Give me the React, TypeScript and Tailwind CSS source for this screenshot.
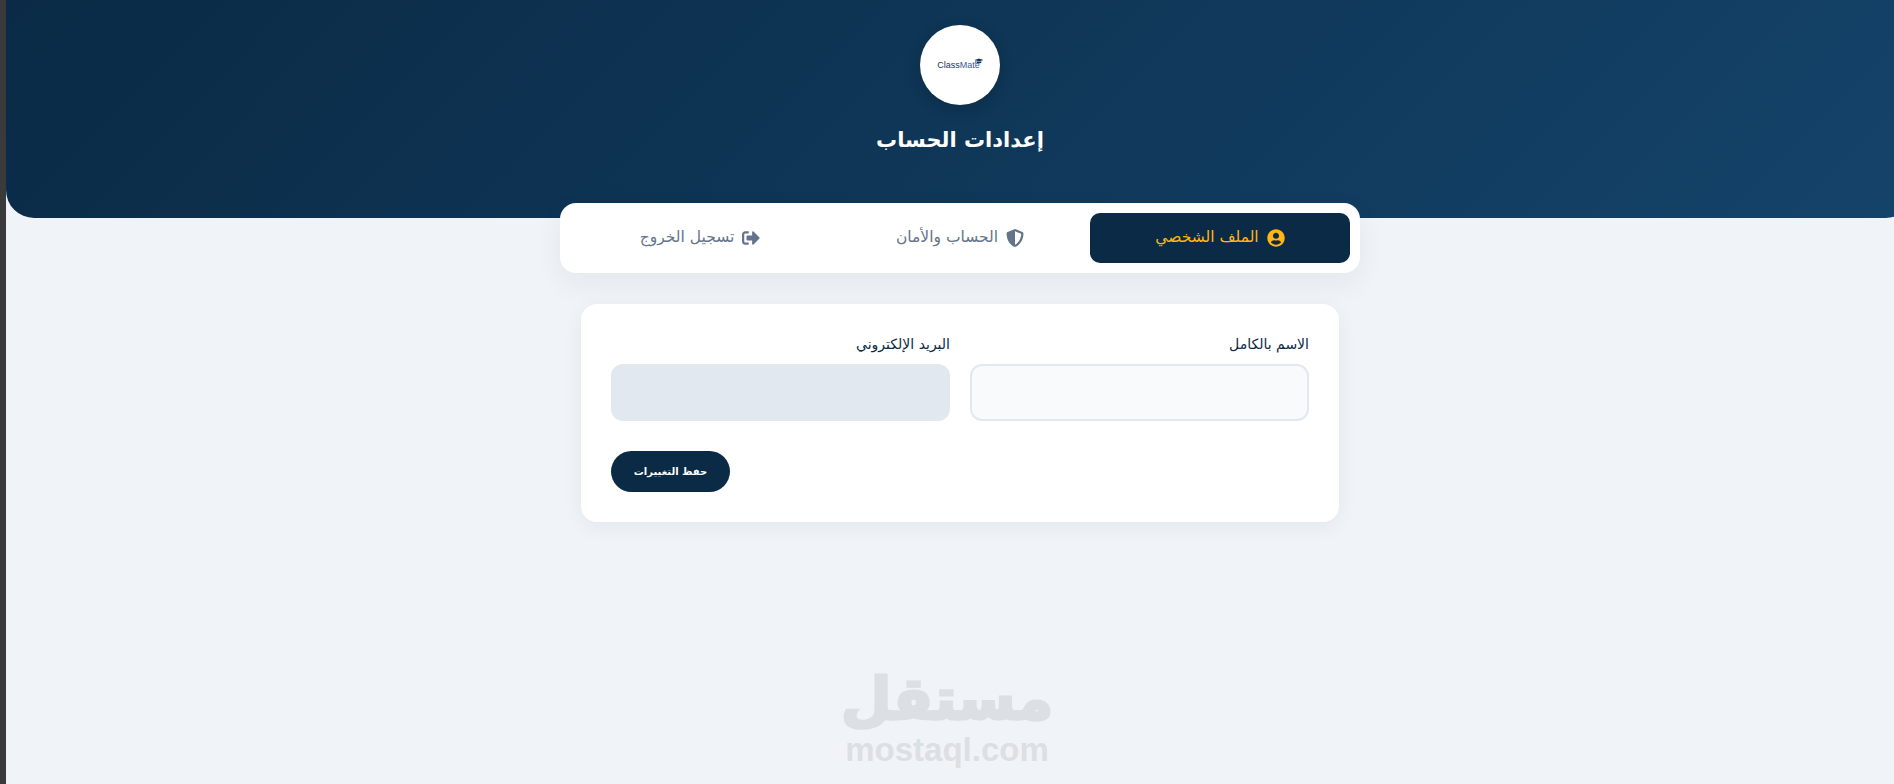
import { FaGraduationCap, FaShieldAlt, FaSignOutAlt, FaUserCircle } from "react-icons/fa";

const arabic = "font-['DejaVu_Sans','Noto_Sans',sans-serif]";

const tabs = [
  { label: "الملف الشخصي", icon: FaUserCircle, active: true },
  { label: "الحساب والأمان", icon: FaShieldAlt, active: false },
  { label: "تسجيل الخروج", icon: FaSignOutAlt, active: false },
];

export default function App() {
  return (
    <div className="flex h-[784px] overflow-hidden bg-[#f0f4f8]">
      <div className="w-[6px] shrink-0 bg-[#3a3a3a]" />
      {/* page runs a bit wider than the window, right corner gets clipped */}
      <div dir="rtl" className={`w-[1908px] shrink-0 flex flex-col items-center ${arabic}`}>
        <header className="w-full h-[218px] shrink-0 pt-[25px] flex flex-col items-center rounded-b-[28px] bg-[linear-gradient(135deg,#0a2a45,#14436a)]">
          <div className="w-[80px] h-[80px] rounded-full bg-white flex items-center justify-center shadow-[0_4px_15px_rgba(0,0,0,0.2)]">
            <span dir="ltr" className="relative mt-[2px] -ml-[3px] font-['Liberation_Sans',sans-serif] text-[9px] text-[#16305f]">
              Class<span className="text-[#3a5a94]">Mate</span>
              <FaGraduationCap className="absolute -right-[3px] -top-[2px] text-[8px] text-[#16305f]" />
            </span>
          </div>
          <h1 className="mt-[19px] text-[21px] leading-8 font-bold text-white">إعدادات الحساب</h1>
        </header>

        <nav className="relative -mt-[15px] w-[800px] h-[70px] shrink-0 p-[10px] flex rounded-2xl bg-white shadow-[0_10px_30px_rgba(10,37,64,0.06)]">
          {tabs.map((tab) => (
            <button
              key={tab.label}
              className={`flex-1 flex items-center justify-center gap-2 rounded-[10px] text-[15.5px] ${
                tab.active ? "bg-[#0a2a45] text-[#ffb612]" : "text-[#64748b]"
              }`}
            >
              <tab.icon className="text-[18px]" />
              {tab.label}
            </button>
          ))}
        </nav>

        <section className="mt-[31px] w-[758px] p-[30px] rounded-2xl bg-white shadow-[0_5px_20px_rgba(10,37,64,0.06)]">
          <div className="grid grid-cols-2 gap-5">
            <label className="block">
              <span className="block h-[30px] leading-5 text-[14px] text-[#0a2a45]">الاسم بالكامل</span>
              <input className="block w-full h-[57px] rounded-xl border-2 border-[#e2e8f0] bg-[#f8fafc]" />
            </label>
            <label className="block">
              <span className="block h-[30px] leading-5 text-[14px] text-[#0a2a45]">البريد الإلكتروني</span>
              <input disabled className="block w-full h-[57px] rounded-xl bg-[#e2e8f0]" />
            </label>
          </div>
          <div className="mt-[30px] flex justify-end">
            <button className="w-[119px] h-[41px] rounded-full bg-[#0a2a45] text-white text-[10px] font-bold">
              حفظ التغييرات
            </button>
          </div>
        </section>

        {/* watermark sits on the screenshot itself, centred on the window rather than the page */}
        <div className="mt-auto pb-[16px] -translate-x-[13px] flex flex-col items-center text-[#dcdfe4] font-bold">
          <span className="text-[58px] leading-[66px] [-webkit-text-stroke:3px_#dcdfe4]">مستقل</span>
          <span dir="ltr" className="font-['Liberation_Sans',sans-serif] text-[33px] leading-[36px]">mostaql.com</span>
        </div>
      </div>
    </div>
  );
}
